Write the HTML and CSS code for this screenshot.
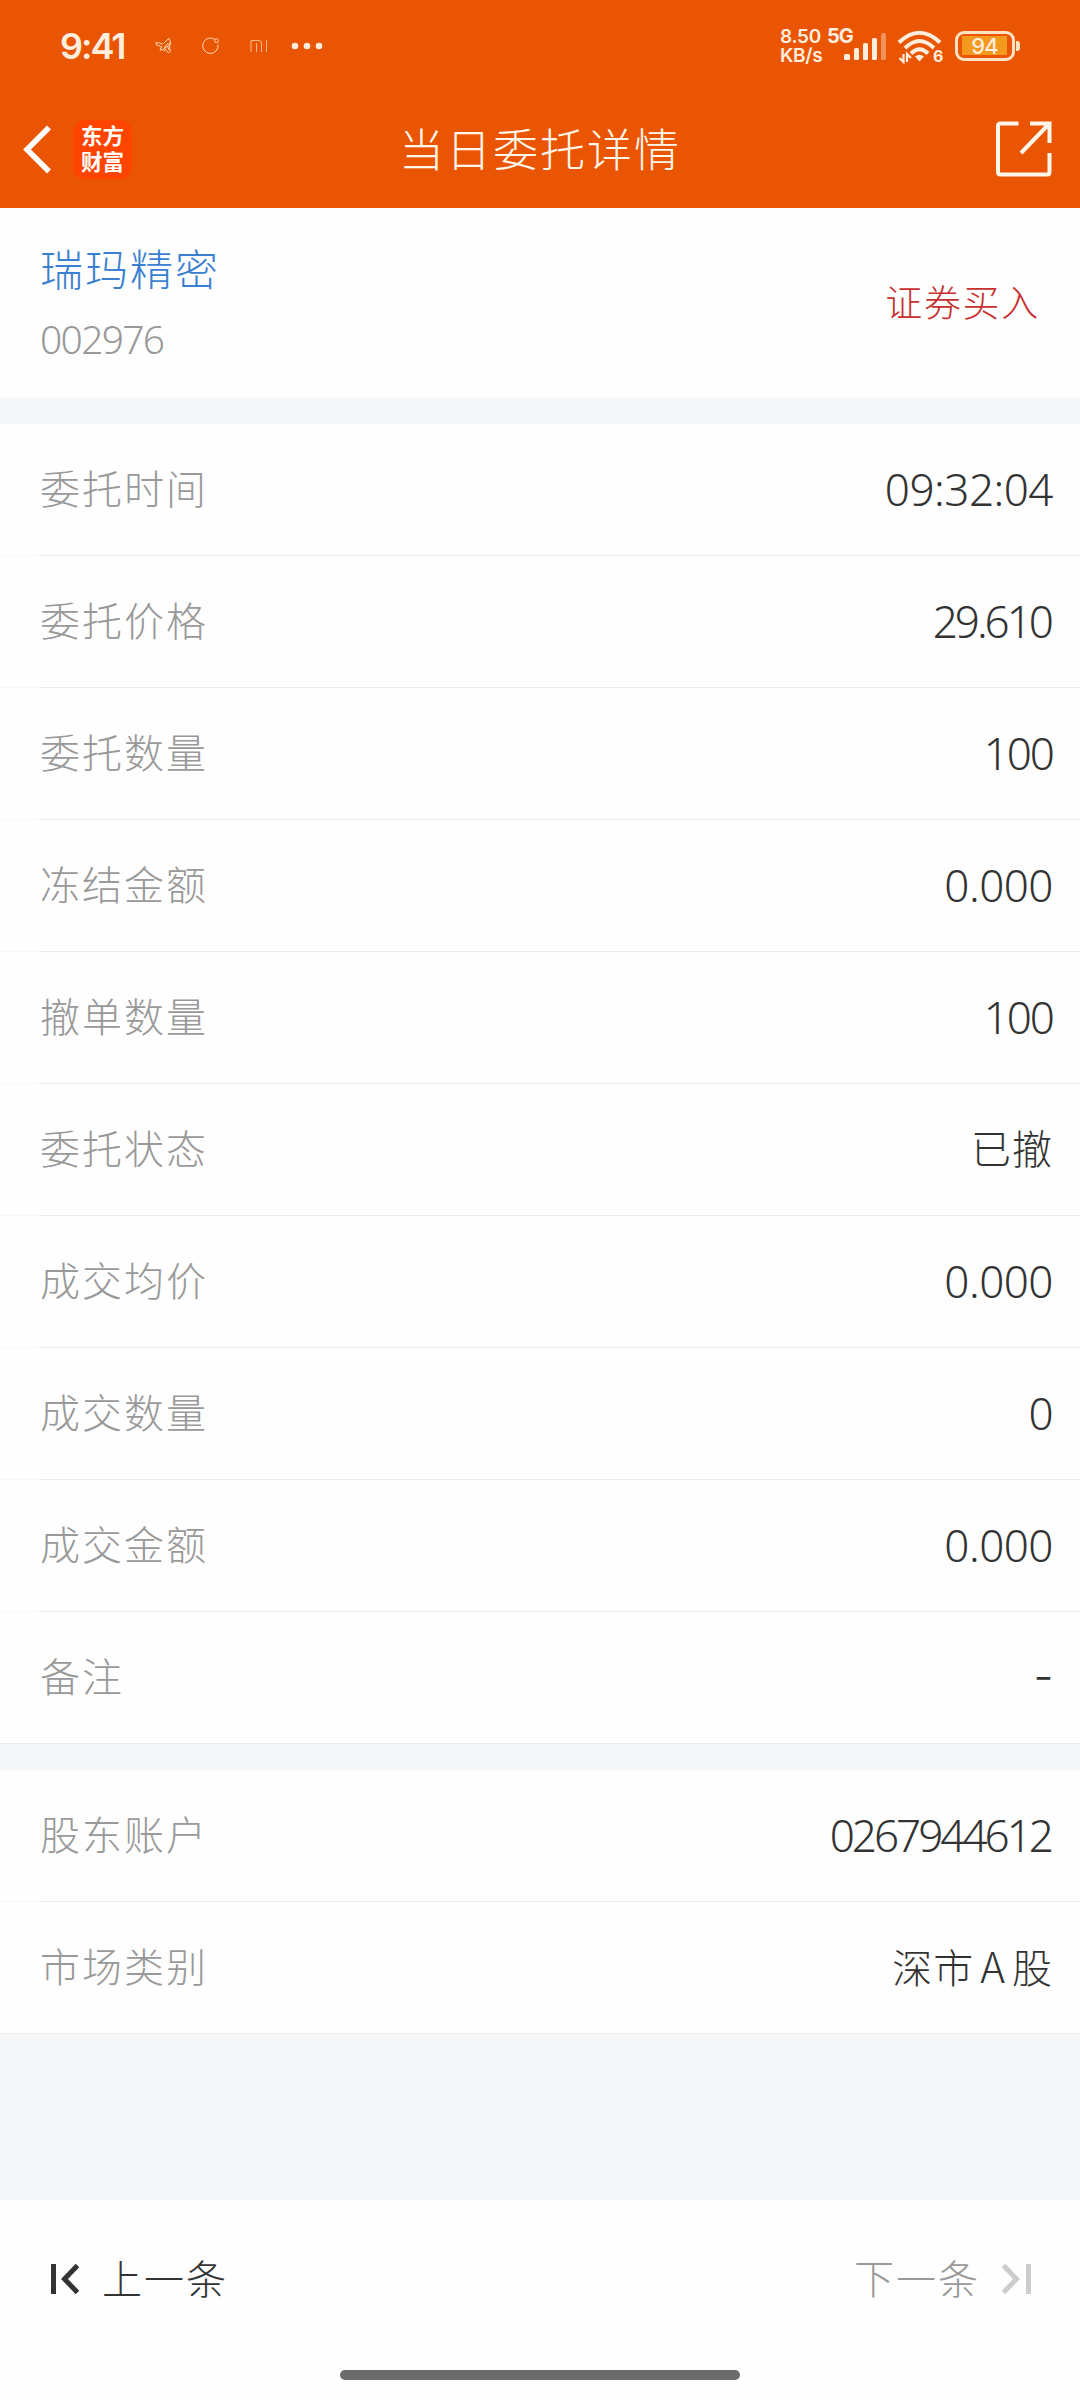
FILE: index.html
```html
<!DOCTYPE html>
<html lang="zh-CN">
<head>
<meta charset="utf-8">
<title>当日委托详情</title>
<link rel="stylesheet" href="styles.css">
</head>
<body>
<header class="header">
  <div class="status">
    <div class="status-left">
      <span class="clock">9:41</span>
      <svg class="tray" width="174" height="24" viewBox="0 0 174 24" fill="none">
        <g stroke="#ffd9b0" stroke-width="1">
          <path d="M8.500 7.500L12 4L14 2.500L15.500 6L13 10L8 13.500L5 14L6.500 10.500L1.500 9L1 6.500L4 7L8 8M9 12L13 7M15.500 6L14.500 12L15.500 15L13.500 17L11 14L10 12.500M8 13.500L10 15M12.500 10L14 14"/>
          <path d="M59.500 3.200A7.700 7.700 0 1 0 63 8.500"/>
          <circle cx="61.500" cy="4.700" r="1.900"/>
          <path d="M96 16V4.500H104Q106.500 4.500 106.500 7V16M101.500 7V16M111.500 4V16" opacity=".75"/>
        </g>
        <g fill="#ffeedd"><circle cx="140" cy="10" r="3.300"/><circle cx="152" cy="10" r="3.300"/><circle cx="164" cy="10" r="3.300"/></g>
      </svg>
    </div>
    <div class="status-right">
      <div class="speed"><span>8.50</span><span>KB/s</span></div>
      <span class="net">5G</span>
      <svg class="signal" width="44" height="30" viewBox="0 0 44 30" fill="#ffeedd">
        <rect x="1" y="22" width="6" height="6" rx="1.500"/><rect x="11" y="16" width="5" height="12" rx="1.500"/><rect x="20" y="11" width="5" height="17" rx="1.500"/><rect x="29" y="6" width="5" height="22" rx="1.500"/><rect x="38" y="1" width="5" height="27" rx="1.500" opacity=".4"/>
      </svg>
      <svg class="wifi" width="46" height="34" viewBox="0 0 46 34">
        <g fill="none" stroke="#ffeedd" stroke-width="4"><path d="M2 12.500Q22.500 -7 43 12.500"/><path d="M8 18Q22.500 4 37 18"/><path d="M14 23.500Q22.500 15 31 23.500"/></g>
        <path d="M18 26.500Q22.500 23 27 26.500L22.500 31.500Z" fill="#ffeedd"/>
        <path d="M6.500 24V32L2.500 28M10 32V24L14 28" fill="none" stroke="#ffeedd" stroke-width="2.200"/>
        <text class="wifi-gen" x="36" y="31.500">6</text>
      </svg>
      <div class="battery"><span class="charge">94</span></div>
    </div>
  </div>
  <nav class="nav">
    <div class="nav-side">
      <svg class="back" width="32" height="50" viewBox="0 0 32 50"><path d="M27 3.500L5 25.500L27 47.500" fill="none" stroke="#fff" stroke-width="5.500"/></svg>
      <div class="logo"><span>东方</span><span>财富</span></div>
    </div>
    <h1 class="title">当日委托详情</h1>
    <div class="nav-side nav-end">
      <svg width="56" height="56" viewBox="0 0 56 56" fill="none" stroke="#fff6ea" stroke-width="4"><path d="M22.500 2.500H4.500Q2 2.500 2 5V50.500Q2 53.500 4.500 53.500H51Q53.500 53.500 53.500 51V32M34 2.500H53.500V22M53 3L25 32"/></svg>
    </div>
  </nav>
</header>
<main>
  <section class="stock">
    <div class="stock-id"><div class="name">瑞玛精密</div><div class="code">002976</div></div>
    <div class="side">证券买入</div>
  </section>
  <section class="group">
    <div class="row"><span class="label">委托时间</span><span class="value">09:32:04</span></div>
    <div class="row"><span class="label">委托价格</span><span class="value tight">29.610</span></div>
    <div class="row"><span class="label">委托数量</span><span class="value short">100</span></div>
    <div class="row"><span class="label">冻结金额</span><span class="value">0.000</span></div>
    <div class="row"><span class="label">撤单数量</span><span class="value short">100</span></div>
    <div class="row"><span class="label">委托状态</span><span class="value zh">已撤</span></div>
    <div class="row"><span class="label">成交均价</span><span class="value">0.000</span></div>
    <div class="row"><span class="label">成交数量</span><span class="value">0</span></div>
    <div class="row"><span class="label">成交金额</span><span class="value">0.000</span></div>
    <div class="row last"><span class="label">备注</span><span class="value dash">-</span></div>
  </section>
  <section class="group">
    <div class="row"><span class="label">股东账户</span><span class="value tight">0267944612</span></div>
    <div class="row last"><span class="label">市场类别</span><span class="value zh">深市<span class="latin">A</span>股</span></div>
  </section>
</main>
<footer class="footer">
  <div class="pager">
    <div class="step">
      <svg width="30" height="32" viewBox="0 0 30 32" fill="none" stroke="#333" stroke-width="5"><path d="M4.500 1V31M28.500 2.500L15.500 16L28.500 29.500"/></svg>
      <span>上一条</span>
    </div>
    <div class="step off">
      <span>下一条</span>
      <svg width="30" height="32" viewBox="0 0 30 32" fill="none" stroke="#ccc" stroke-width="5"><path d="M27.500 1V31M2.500 2.500L15.500 16L2.500 29.500"/></svg>
    </div>
  </div>
  <div class="home"></div>
</footer>
</body>
</html>
```
FILE: styles.css
```css
* { box-sizing: border-box; }
body {
  margin: 0;
  width: 1080px;
  height: 2400px;
  display: flex;
  flex-direction: column;
  background: #f6f7f9;
  font-family: "Noto Sans CJK SC", sans-serif;
  font-weight: 300;
  overflow: hidden;
}
.header { height: 208px; background: #ea5504; color: #fff6ea; }
.status {
  height: 92px;
  padding: 0 60px;
  display: flex;
  justify-content: space-between;
  color: #ffeedd;
}
.status-left, .status-right { display: flex; }
.status-right { margin-right: 5px; }
.clock { width: 70px; font: 600 36px/92px Inter, sans-serif; letter-spacing: -2px; }
.tray { margin: 36px 0 0 25px; }
.speed { width: 47px; padding-top: 27px; display: flex; flex-direction: column; font: 600 19px/19px Inter, sans-serif; letter-spacing: -.300px; white-space: nowrap; }
.net { width: 28px; padding-top: 27px; font: 700 20px/19px Inter, sans-serif; letter-spacing: -1px; }
.signal { margin: 32px 0 0 -12px; }
.wifi { margin: 30px 0 0 10px; }
.wifi-gen { font: 700 16px Inter, sans-serif; fill: #ffeedd; }
.battery {
  position: relative;
  width: 60px;
  height: 30px;
  margin: 31px 0 0 12px;
  padding: 2px 4px;
  border: 3px solid #ffe3c4;
  border-radius: 9px;
}
.battery::after {
  content: "";
  position: absolute;
  right: -8px;
  top: 7px;
  width: 4px;
  height: 10px;
  border-radius: 0 3px 3px 0;
  background: #ffe3c4;
}
.charge {
  display: block;
  width: 45px;
  height: 19px;
  background: #f39a1e;
  font: 500 22px/20px Inter, sans-serif;
  letter-spacing: -1px;
  text-align: center;
}
.nav { height: 116px; display: flex; justify-content: space-between; align-items: center; padding: 0 28px 2px 22px; }
.nav-side { width: 240px; display: flex; align-items: center; gap: 19px; }
.nav-end { justify-content: flex-end; }
.logo {
  width: 59px;
  height: 59px;
  padding-top: 2px;
  border-radius: 12px;
  background: #ff4400;
  color: #fff;
  display: flex;
  flex-direction: column;
  align-items: center;
  font: 700 21.500px/26px "Noto Sans CJK SC", sans-serif;
}
.title { margin: 0 0 2px 6px; font-weight: 300; font-size: 45px; line-height: 60px; letter-spacing: 2px; }
.stock {
  height: 190px;
  padding: 0 40px;
  background: #fefefe;
  display: flex;
  justify-content: space-between;
  align-items: center;
}
.stock-id { padding-top: 5px; }
.name { font-size: 43px; line-height: 66px; letter-spacing: 2px; color: #3b7fd0; }
.code { font: 300 39px/78px "Noto Sans", sans-serif; letter-spacing: -1.700px; color: #999; }
.side { font-size: 37px; line-height: 60px; padding-bottom: 4px; letter-spacing: 1.700px; color: #c8302f; }
.group { margin-top: 26px; background: #fefefe; }
.row {
  height: 132px;
  padding: 0 27px 0 40px;
  display: flex;
  justify-content: space-between;
  align-items: center;
  line-height: 60px;
  background: linear-gradient(90deg, #f7f7f7 39px, #ececec 39px) bottom / 100% 1px no-repeat;
}
.last { background-image: linear-gradient(#e9ebed, #e9ebed); }
.label { padding-bottom: 6px; font-size: 40px; letter-spacing: 2px; color: #999; }
.value { padding-bottom: 3px; font-family: "Noto Sans", sans-serif; font-size: 44px; letter-spacing: -.500px; color: #333; }
.tight { padding-right: 2px; letter-spacing: -3px; }
.short { letter-spacing: -2px; }
.zh { padding-bottom: 6px; font-family: "Noto Sans CJK SC", sans-serif; font-size: 40px; letter-spacing: 1px; }
.latin { font-size: 42px; padding: 0 6px; }
.dash { padding-bottom: 4px; font-family: Inter, sans-serif; }
.footer { margin-top: auto; height: 200px; background: #fefefe; display: flex; flex-direction: column; align-items: center; }
.pager { width: 100%; height: 158px; padding: 0 49px; display: flex; justify-content: space-between; align-items: center; font-size: 40px; color: #333; letter-spacing: 2px; }
.step { display: flex; align-items: center; gap: 23px; }
.step span { line-height: 60px; padding-bottom: 5px; }
.off { gap: 21px; color: #999; }
.home { width: 400px; height: 10px; margin-top: 12px; border-radius: 5px; background: #6b6b6b; }
```
